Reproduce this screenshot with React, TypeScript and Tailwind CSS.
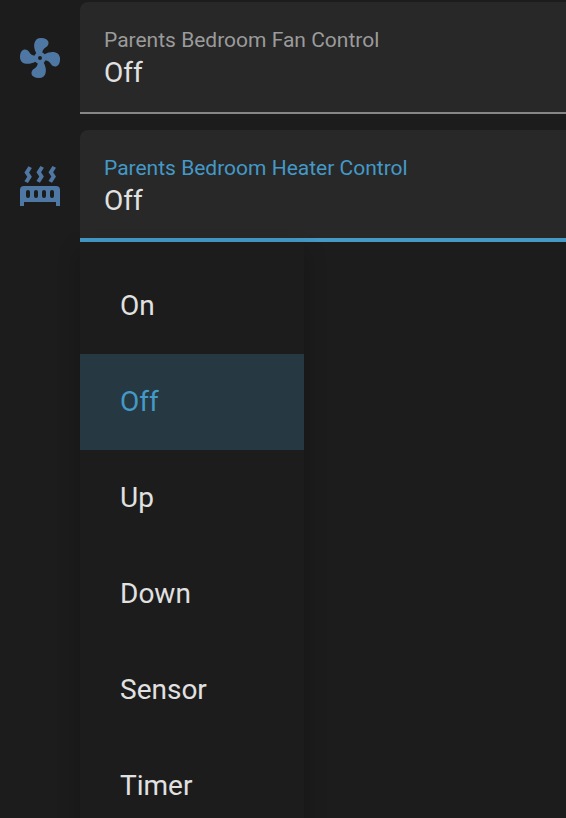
import { useState } from "react";

const FAN_PATH =
  "M12,11A1,1 0 0,0 11,12A1,1 0 0,0 12,13A1,1 0 0,0 13,12A1,1 0 0,0 12,11M12.5,2C17,2 17.11,5.57 14.75,6.75C13.76,7.24 13.32,8.29 13.13,9.22C13.61,9.42 14.03,9.73 14.35,10.13C18.05,8.13 22.03,8.92 22.03,12.5C22.03,17 18.46,17.1 17.28,14.73C16.78,13.74 15.72,13.3 14.79,13.11C14.59,13.59 14.28,14 13.88,14.34C15.87,18.03 15.08,22 11.5,22C7,22 6.91,18.42 9.27,17.24C10.25,16.75 10.69,15.71 10.89,14.79C10.4,14.59 9.97,14.27 9.65,13.87C5.96,15.85 2,15.07 2,11.5C2,7 5.56,6.89 6.74,9.26C7.24,10.25 8.29,10.68 9.22,10.87C9.41,10.39 9.73,9.97 10.14,9.65C8.15,5.96 8.94,2 12.5,2Z";

const RADIATOR_PATH =
  "M7.95,3L6.53,5.19L7.95,7.4H7.94L5.95,10.5L4.22,9.6L5.64,7.39L4.22,5.19L6.22,2.09L7.95,3M13.95,2.89L12.53,5.1L13.95,7.3L13.94,7.31L11.95,10.4L10.22,9.5L11.64,7.3L10.22,5.1L12.22,2L13.95,2.89M20,2.89L18.56,5.1L20,7.3V7.31L18,10.4L16.25,9.5L17.67,7.3L16.25,5.1L18.25,2L20,2.89M2,22V14A2,2 0 0,1 4,12H20A2,2 0 0,1 22,14V22H20V20H4V22H2M6,14A1,1 0 0,0 5,15V17A1,1 0 0,0 6,18A1,1 0 0,0 7,17V15A1,1 0 0,0 6,14M10,14A1,1 0 0,0 9,15V17A1,1 0 0,0 10,18A1,1 0 0,0 11,17V15A1,1 0 0,0 10,14M14,14A1,1 0 0,0 13,15V17A1,1 0 0,0 14,18A1,1 0 0,0 15,17V15A1,1 0 0,0 14,14M18,14A1,1 0 0,0 17,15V17A1,1 0 0,0 18,18A1,1 0 0,0 19,17V15A1,1 0 0,0 18,14Z";

const OPTIONS = ["On", "Off", "Up", "Down", "Sensor", "Timer"];

type RowProps = {
  id: string;
  label: string;
  icon: string;
  open?: boolean;
};

function ControlRow({ id, label, icon, open = false }: RowProps) {
  const [value, setValue] = useState("Off");

  return (
    <div className="flex items-center gap-4 pl-4">
      <svg viewBox="0 0 24 24" className="size-12 shrink-0 fill-[#4f77a3]" aria-hidden="true">
        <path d={icon} />
      </svg>
      <div className="relative min-w-0 flex-1">
        <div
          className={
            open
              ? "flex h-28 flex-col rounded-tl-lg border-b-4 border-[#4499c7] bg-[#282828] pt-6"
              : "flex h-28 flex-col rounded-tl-lg border-b-2 border-[#868686] bg-[#282828] pt-6"
          }
        >
          <label
            htmlFor={id}
            className={
              open
                ? "truncate px-6 text-[21px] leading-7 text-[#4499c7]"
                : "truncate px-6 text-[21px] leading-7 text-[#9b9b9b]"
            }
          >
            {label}
          </label>
          <select
            id={id}
            value={value}
            onChange={(e) => setValue(e.target.value)}
            className="h-[38px] w-full appearance-none bg-transparent px-6 text-[28px] leading-[38px] text-[#e1e1e1] outline-none"
          >
            {OPTIONS.map((option) => (
              <option key={option}>{option}</option>
            ))}
          </select>
        </div>
        {open && (
          <div
            role="listbox"
            aria-label={label}
            className="absolute top-full left-0 z-10 flex w-56 flex-col bg-[#1c1c1c] py-4 shadow-[0_10px_20px_2px_rgba(0,0,0,0.2)]"
          >
            {OPTIONS.map((option) => (
              <button
                key={option}
                type="button"
                role="option"
                aria-selected={option === value}
                onClick={() => setValue(option)}
                className={
                  option === value
                    ? "h-24 bg-[#263841] px-10 text-left text-[28px] leading-9 text-[#4499c7]"
                    : "h-24 px-10 text-left text-[28px] leading-9 text-[#e1e1e1]"
                }
              >
                {option}
              </button>
            ))}
          </div>
        )}
      </div>
    </div>
  );
}

export default function App() {
  return (
    <main className="flex h-screen flex-col gap-4 overflow-hidden bg-[#1c1c1c] pt-0.5 font-[Roboto,sans-serif]">
      <ControlRow id="fan-control" label="Parents Bedroom Fan Control" icon={FAN_PATH} />
      <ControlRow id="heater-control" label="Parents Bedroom Heater Control" icon={RADIATOR_PATH} open />
    </main>
  );
}
